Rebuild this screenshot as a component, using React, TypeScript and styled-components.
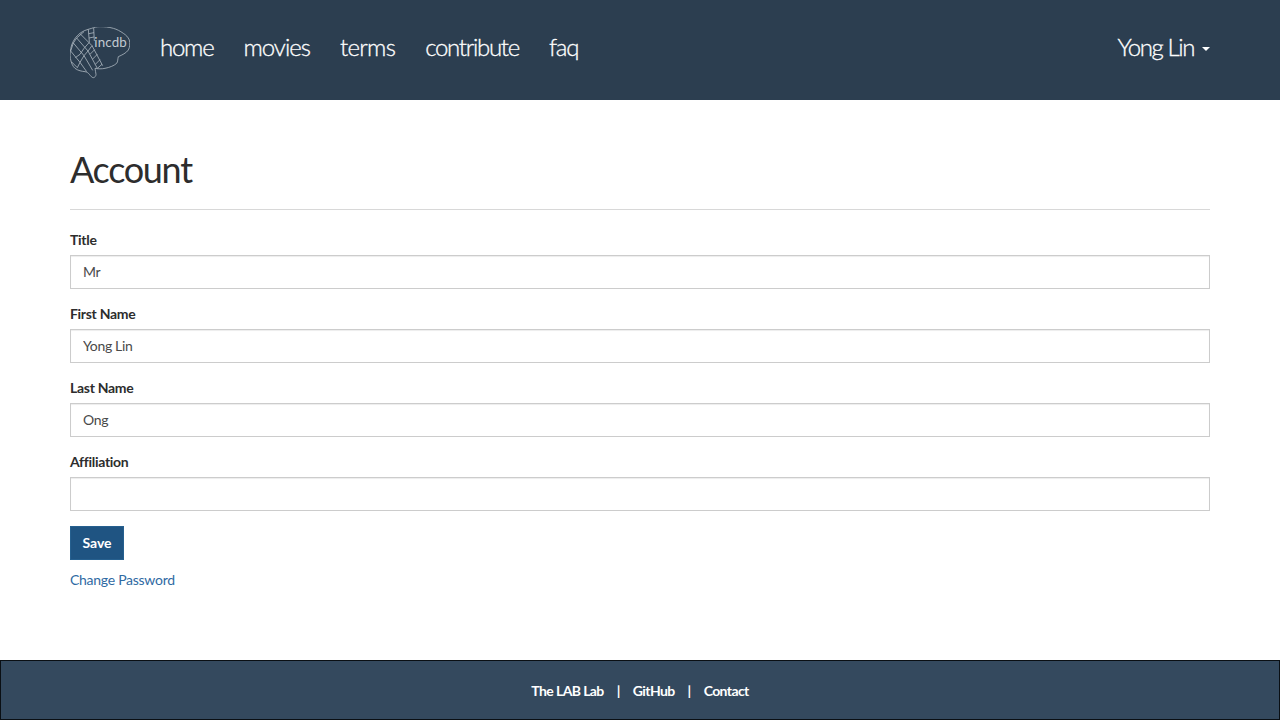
import React from "react";
import styled, { createGlobalStyle } from "styled-components";

const Global = createGlobalStyle`
  html, body { margin: 0; padding: 0; background: #fff; }
  body { font-family: Lato, "Noto Sans", sans-serif; font-size: 14px; line-height: 20px; color: #2d2d2d; }
  * { box-sizing: border-box; }
`;

const Page = styled.div`
  height: 720px;
  display: flex;
  flex-direction: column;
`;
const Nav = styled.nav`
  height: 100px;
  flex: none;
  background: #2c3e50;
  padding: 0 70px 6px;
  display: flex;
  align-items: center;
`;
const Brand = styled.a`
  display: block;
  align-self: flex-start;
  width: 60px;
  height: 52px;
  margin: 27px 15px 0 0;
`;
const NavList = styled.div`
  display: flex;
  flex: 1;
`;
const NavLink = styled.a<{ $tight: number }>`
  padding: 0 15px;
  font-size: 24px;
  font-weight: 300;
  line-height: 30px;
  letter-spacing: ${(p) => p.$tight}px;
  -webkit-text-stroke: 0.3px #fff;
  color: #fff;
`;
const UserMenu = styled.a`
  display: flex;
  align-items: center;
  font-size: 24px;
  font-weight: 300;
  line-height: 30px;
  letter-spacing: -1.4px;
  -webkit-text-stroke: 0.3px #fff;
  color: #fff;
`;
const Caret = styled.span`
  width: 0;
  height: 0;
  margin-left: 8px;
  margin-top: 3px;
  border-top: 4px solid #fff;
  border-left: 4px solid transparent;
  border-right: 4px solid transparent;
`;
const Main = styled.main`
  flex: 1;
  padding: 0 70px;
`;
const Header = styled.div`
  margin-top: 49px;
  padding-bottom: 9px;
  border-bottom: 1px solid #d8d8d8;
  margin-bottom: 20px;
`;
const Title = styled.h1`
  margin: 0 0 11px;
  font-size: 36px;
  font-weight: 400;
  line-height: 40px;
  letter-spacing: -1.3px;
  color: #2d2d2d;
`;
const Group = styled.div`
  margin-bottom: 15px;
`;
const Label = styled.label`
  display: block;
  margin-bottom: 5px;
  font-weight: 700;
  font-size: 14px;
  letter-spacing: -0.3px;
`;
const Input = styled.input`
  display: block;
  width: 100%;
  height: 34px;
  padding: 5px 12px 7px;
  font: inherit;
  letter-spacing: -0.35px;
  color: #4a4a4a;
  background: #fff;
  border: 1px solid #ccc;
  border-radius: 0;
  box-shadow: inset 0 1px 1px rgba(0, 0, 0, 0.075);
  outline: none;
`;
const Save = styled.button`
  display: block;
  height: 34px;
  width: 54px;
  padding: 0;
  font: inherit;
  font-weight: 700;
  color: #fff;
  background: #1f5482;
  border: 1px solid #26608f;
  border-radius: 0;
`;
const PasswordLink = styled.a`
  display: block;
  margin-top: 10px;
  letter-spacing: -0.27px;
  color: #2f6aa3;
`;
const Footer = styled.footer`
  height: 60px;
  flex: none;
  padding-top: 2px;
  background: #34495e;
  border: 1px solid #0a0f14;
  display: flex;
  align-items: center;
  justify-content: center;
  gap: 13px;
  color: #fff;
  font-weight: 700;
  letter-spacing: -0.6px;
`;

const Logo = () => (
  <svg width="60" height="52" viewBox="30 36 180 156" fill="none" stroke="#aeb9c2" strokeWidth="2.4" strokeLinejoin="round">
    <path d="M95 40C80 44 68 48 60 55C48 64 40 76 35 90C31 104 29 118 31 130C34 144 38 154 45 160C54 167 66 169 75 170C81 171 85 174 88 178C92 183 96 188 100 188C105 187 108 183 108 178C108 172 105 166 105 160C115 162 125 162 135 160C150 157 162 152 170 145C174 140 173 131 175 125C186 120 199 114 205 105C210 96 210 85 208 75C204 66 198 60 190 55C180 48 171 43 160 40C146 36 133 35 120 35C111 35 102 37 95 40Z" />
    <path d="M85 43L88 82M101 39L103 78M86 56L102 53M87 69L102 66" />
    <path d="M60 56L96 92M50 69L84 108M40 84L72 122M32 108L60 142M34 140L52 158" />
    <path d="M72 50L50 69L40 84L32 108M88 82L72 100L60 118L46 128M96 92L84 108L72 122L60 142L52 158" />
    <path d="M96 92L128 152M84 108L112 160M72 122L98 166M60 142L80 170" />
    <path d="M104 104L90 118M112 118L98 132M120 134L106 148M126 148L112 160" />
    <text x="103" y="96" stroke="none" fill="#c2cad0" fontFamily="Lato, sans-serif" fontSize="40" letterSpacing="0.5">incdb</text>
  </svg>
);

export default function App() {
  return (
    <Page>
      <Global />
      <Nav>
        <Brand><Logo /></Brand>
        <NavList>
          <NavLink $tight={-1.25}>home</NavLink>
          <NavLink $tight={-1}>movies</NavLink>
          <NavLink $tight={-0.7}>terms</NavLink>
          <NavLink $tight={-1.3}>contribute</NavLink>
          <NavLink $tight={-1.2}>faq</NavLink>
        </NavList>
        <UserMenu>Yong Lin<Caret /></UserMenu>
      </Nav>
      <Main>
        <Header><Title>Account</Title></Header>
        <Group><Label>Title</Label><Input defaultValue="Mr" /></Group>
        <Group><Label>First Name</Label><Input defaultValue="Yong Lin" /></Group>
        <Group><Label>Last Name</Label><Input defaultValue="Ong" /></Group>
        <Group><Label>Affiliation</Label><Input defaultValue="" /></Group>
        <Save>Save</Save>
        <PasswordLink>Change Password</PasswordLink>
      </Main>
      <Footer>
        <span>The LAB Lab</span><span>|</span><span>GitHub</span><span>|</span><span>Contact</span>
      </Footer>
    </Page>
  );
}
